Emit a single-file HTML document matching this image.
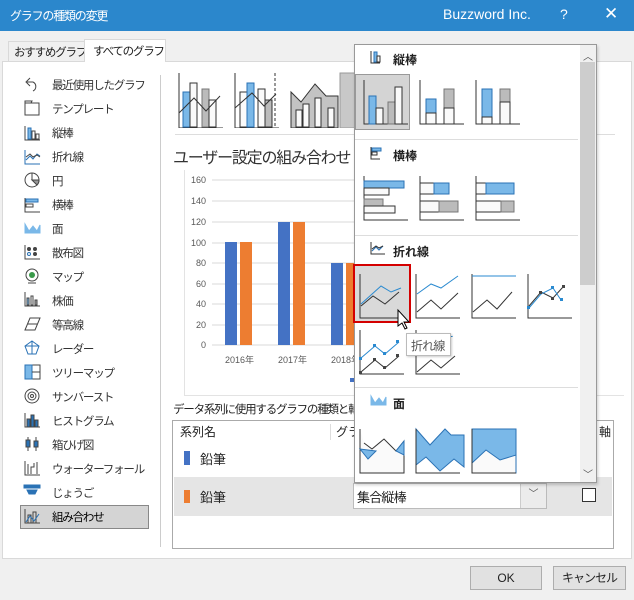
<!DOCTYPE html>
<html><head><meta charset="utf-8"><style>
*{box-sizing:border-box;margin:0;padding:0}
body{width:634px;height:600px;overflow:hidden;background:#f0f0f0;font-family:"Liberation Sans","Noto Sans CJK JP",sans-serif;font-size:12px;color:#222;position:relative}
.a{position:absolute}
.n{font-size:11px;letter-spacing:-0.8px}
.title{left:0;top:0;width:634px;height:31px;background:#2b87cc;color:#fff;font-size:13px}
.li{position:absolute;left:52px;font-size:11.5px;letter-spacing:-1.2px;color:#333}
.btn{position:absolute;top:566px;height:24px;border:1px solid #adadad;background:#e1e1e1;text-align:center;line-height:22px;font-size:12px}
</style></head><body>
<div class="a title"><span class="a" style="left:10px;top:7px;font-size:12px;letter-spacing:-1.2px">グラフの種類の変更</span><span class="a" style="left:443px;top:6px;font-size:14px">Buzzword Inc.</span><span class="a" style="left:560px;top:6px;font-size:14px">?</span><span class="a" style="left:604px;top:4px;font-size:17px">✕</span></div>
<!-- tabs -->
<div class="a" style="left:8px;top:41px;width:77px;height:20px;border:1px solid #d9d9d9;border-bottom:none;background:#f0f0f0;font-size:11.5px;letter-spacing:-1.2px;padding:2px 0 0 5px;white-space:nowrap">おすすめグラフ</div>
<div class="a" style="left:84px;top:39px;width:82px;height:23px;border:1px solid #d9d9d9;border-bottom:none;background:#fff;font-size:11.5px;letter-spacing:-1.2px;padding:3px 0 0 8px;z-index:2;white-space:nowrap">すべてのグラフ</div>
<div class="a" style="left:2px;top:61px;width:630px;height:498px;background:#fff;border:1px solid #d9d9d9"></div>
<!-- left list -->
<div class="a" style="left:20px;top:505px;width:129px;height:24px;background:#d4d4d4;border:1px solid #888"></div>
<svg class="a" style="left:0;top:0" width="160" height="560">
<g fill="none" stroke="#444" stroke-width="1">
<path d="M30 78 l-4 4 4 4 M27 82 h6 a5 5 0 0 1 0 9"/>
<path d="M25 103 h14 v12 h-14z M25 103 h6 l1 -2 h-7z"/>
<path d="M25 126 v14 h15"/><rect x="28" y="128" width="3" height="11" fill="#7ab8e8" stroke="#2a72b5"/><rect x="32" y="131" width="3" height="8"/><rect x="36" y="134" width="3" height="5"/>
<path d="M25 150 v14 h15 M26 160 l4-4 3 3 4-5 3 2" stroke="#2a72b5"/><path d="M26 157 l4-3 3 3 4-2 3 2"/>
<circle cx="32" cy="180" r="7"/><path d="M32 173 v7 h7" /><path d="M32 180 l5 5 a7 7 0 0 0 2-5z" fill="#999"/>
<path d="M25 198 v14 h15"/><rect x="26" y="199" width="12" height="3" fill="#7ab8e8" stroke="#2a72b5"/><rect x="26" y="204" width="7" height="3"/>
<path d="M25 224 l4 7 4-5 4 5 3-6 v8 h-15z" fill="#7ab8e8" stroke="#7ab8e8"/>
<path d="M25 245 v14 h15"/><circle cx="29" cy="249" r="1.5" fill="#444"/><circle cx="35" cy="249" r="1.5" fill="#444"/><circle cx="29" cy="254" r="1.5" stroke="#2a72b5"/><circle cx="35" cy="254" r="1.5" fill="#444"/>
<circle cx="32" cy="275" r="6"/><circle cx="32" cy="275" r="3" fill="#3a9a4a" stroke="none"/><path d="M28 283 h8"/>
<path d="M25 292 v14 h15"/><rect x="27" y="298" width="2" height="7" fill="#7ab8e8"/><rect x="31" y="296" width="2" height="9"/><rect x="35" y="300" width="2" height="5" fill="#aaa"/>
<path d="M25 330 l5-12 h10 l-5 12z M28 324 h9"/>
<path d="M32 341 l7 5 -3 8 h-8 l-3-8z M32 341 v13 M25 346 l14 0" stroke="#2a72b5"/>
<rect x="25" y="365" width="15" height="14"/><rect x="25" y="365" width="7" height="14" fill="#7ab8e8" stroke="#2a72b5"/><path d="M32 372 h8"/>
<circle cx="32" cy="396" r="7"/><circle cx="32" cy="396" r="4"/><circle cx="32" cy="396" r="1.5"/>
<path d="M25 413 v14 h15"/><rect x="27" y="419" width="3" height="8" fill="#2a72b5"/><rect x="31" y="415" width="3" height="12" fill="#2a72b5"/><rect x="35" y="420" width="3" height="7" fill="#2a72b5"/>
<path d="M28 437 v14 M36 437 v14" /><rect x="26" y="440" width="4" height="7" fill="#2a72b5"/><rect x="34" y="441" width="4" height="6" fill="#2a72b5"/>
<path d="M25 461 v14 h15 M28 474 v-10 M31 474 v-7 h3 v-4 M37 474 v-12"/>
<path d="M24 485 h16 v3 h-16z M27 490 h10 l-2 4 h-6z" fill="#2a72b5" stroke="#2a72b5"/>
<path d="M25 509 v14 h15"/><rect x="28" y="515" width="3" height="8"/><rect x="33" y="512" width="3" height="11"/><path d="M26 522 l4-6 4 5 5-7" stroke="#2a72b5"/>
</g></svg>
<div class="li" style="top:77px">最近使用したグラフ</div>
<div class="li" style="top:101px">テンプレート</div>
<div class="li" style="top:125px">縦棒</div>
<div class="li" style="top:149px">折れ線</div>
<div class="li" style="top:173px">円</div>
<div class="li" style="top:197px">横棒</div>
<div class="li" style="top:221px">面</div>
<div class="li" style="top:245px">散布図</div>
<div class="li" style="top:269px">マップ</div>
<div class="li" style="top:293px">株価</div>
<div class="li" style="top:317px">等高線</div>
<div class="li" style="top:341px">レーダー</div>
<div class="li" style="top:365px">ツリーマップ</div>
<div class="li" style="top:389px">サンバースト</div>
<div class="li" style="top:413px">ヒストグラム</div>
<div class="li" style="top:437px">箱ひげ図</div>
<div class="li" style="top:461px">ウォーターフォール</div>
<div class="li" style="top:485px">じょうご</div>
<div class="li" style="top:509px;color:#000">組み合わせ</div>
<div class="a" style="left:160px;top:75px;width:1px;height:472px;background:#ccc"></div>
<!-- top thumbnails -->
<svg class="a" style="left:170px;top:68px" width="190" height="60">
<g fill="#fafafa" stroke="#333">
<path d="M9 5 v55 h44" fill="none"/><rect x="13" y="24" width="7" height="35" fill="#7ab8e8" stroke="#2a72b5"/><rect x="20" y="15" width="7" height="44"/><rect x="32" y="21" width="7" height="38" fill="#bbb" stroke="#777"/><rect x="39" y="32" width="7" height="27"/><path d="M9 45 l15-15 12 13 14-15" fill="none"/>
<path d="M65 5 v55 h44" fill="none"/><path d="M105 5 v55" stroke-dasharray="3 2" fill="none"/><rect x="70" y="24" width="7" height="35"/><rect x="77" y="15" width="7" height="44" fill="#7ab8e8" stroke="#2a72b5"/><rect x="88" y="21" width="7" height="38"/><rect x="95" y="32" width="7" height="27" fill="#bbb"/><path d="M65 40 l17-15 12 13 12-12" fill="none"/>
<path d="M121 24 l10 10 14-18 11 12 h12 v32 h-47z" fill="#c3c3c3"/><rect x="126" y="42" width="6" height="17"/><rect x="133" y="36" width="6" height="23"/><rect x="145" y="30" width="6" height="29"/><rect x="158" y="40" width="6" height="19"/>
</g><rect x="170" y="5" width="20" height="55" fill="#c8c8c8" stroke="#999"/></svg>
<div class="a" style="left:175px;top:134px;width:440px;height:1px;background:#ddd"></div>
<div class="a" style="left:173px;top:144px;font-size:16px;letter-spacing:-1.2px;color:#333">ユーザー設定の組み合わせ</div>
<!-- chart -->
<div class="a" style="left:184px;top:170px;width:440px;height:226px;border-left:1px solid #e3e3e3;border-bottom:1px solid #e3e3e3"></div>
<svg class="a" style="left:184px;top:170px" width="180" height="226">
<g font-size="9" fill="#595959" text-anchor="end" font-family="Liberation Sans,sans-serif">
<text x="22" y="13">160</text><text x="22" y="34">140</text><text x="22" y="55">120</text><text x="22" y="76">100</text><text x="22" y="96">80</text><text x="22" y="117">60</text><text x="22" y="137">40</text><text x="22" y="158">20</text><text x="22" y="178">0</text></g>
<g stroke="#d9d9d9"><path d="M28 10h160M28 31h160M28 52h160M28 73h160M28 93h160M28 114h160M28 134h160M28 155h160M28 175h160"/></g>
<rect x="41" y="72" width="12" height="103" fill="#4472c4"/><rect x="56" y="72" width="12" height="103" fill="#ed7d31"/>
<rect x="94" y="52" width="12" height="123" fill="#4472c4"/><rect x="109" y="52" width="12" height="123" fill="#ed7d31"/>
<rect x="147" y="93" width="12" height="82" fill="#4472c4"/><rect x="162" y="93" width="12" height="82" fill="#ed7d31"/>
<g font-size="9" fill="#595959" font-family="Liberation Sans,Noto Sans CJK JP,sans-serif"><text x="41" y="193">2016年</text><text x="94" y="193">2017年</text><text x="147" y="193">2018年</text></g>
<rect x="166" y="208" width="4" height="4" fill="#4472c4"/>
</svg>
<div class="a" style="left:173px;top:401px;font-size:11.5px;letter-spacing:-1.2px;color:#222;white-space:nowrap">データ系列に使用するグラフの種類と軸</div>
<!-- table -->
<div class="a" style="left:172px;top:420px;width:442px;height:129px;border:1px solid #aaa;background:#fff"></div>
<div class="a" style="left:180px;top:423px;font-size:12px">系列名</div>
<div class="a" style="left:330px;top:424px;width:1px;height:16px;background:#ddd"></div>
<div class="a" style="left:336px;top:423px;font-size:12px">グラ</div>
<div class="a" style="left:599px;top:423px;font-size:12px">軸</div>
<div class="a" style="left:184px;top:451px;width:6px;height:14px;background:#4472c4"></div>
<div class="a" style="left:200px;top:449px;font-size:13px">鉛筆</div>
<div class="a" style="left:174px;top:477px;width:438px;height:39px;background:#e5e5e5"></div>
<div class="a" style="left:184px;top:490px;width:6px;height:13px;background:#ed7d31"></div>
<div class="a" style="left:200px;top:487px;font-size:13px">鉛筆</div>
<div class="a" style="left:353px;top:483px;width:194px;height:26px;background:#fff;border:1px solid #bbb"></div>
<div class="a" style="left:520px;top:484px;width:26px;height:24px;background:#ececec;border-left:1px solid #ccc;text-align:center;line-height:22px;font-size:10px;color:#555">﹀</div>
<div class="a" style="left:357px;top:487px;font-size:13px;letter-spacing:-0.8px">集合縦棒</div>
<div class="a" style="left:582px;top:488px;width:14px;height:14px;border:1px solid #333;background:#fff"></div>
<!-- buttons -->
<div class="btn" style="left:470px;width:72px">OK</div>
<div class="btn" style="left:553px;width:73px;letter-spacing:-1px">キャンセル</div>
<!-- popup -->
<div class="a" style="left:354px;top:44px;width:243px;height:439px;background:#fff;border:1px solid #999;box-shadow:1px 2px 3px rgba(0,0,0,.2)"></div>
<div class="a" style="left:580px;top:45px;width:16px;height:437px;background:#f0f0f0"></div>
<div class="a" style="left:580px;top:62px;width:15px;height:223px;background:#cdcdcd"></div>
<div class="a" style="left:583px;top:48px;font-size:10px;color:#555">︿</div>
<div class="a" style="left:583px;top:466px;font-size:10px;color:#555">﹀</div>
<div class="a" style="left:393px;top:51px;font-size:12px;font-weight:bold">縦棒</div>
<div class="a" style="left:393px;top:147px;font-size:12px;font-weight:bold">横棒</div>
<div class="a" style="left:393px;top:243px;font-size:12px;font-weight:bold">折れ線</div>
<div class="a" style="left:393px;top:395px;font-size:12px;font-weight:bold">面</div>
<div class="a" style="left:355px;top:139px;width:223px;height:1px;background:#ddd"></div>
<div class="a" style="left:355px;top:235px;width:223px;height:1px;background:#ddd"></div>
<div class="a" style="left:355px;top:387px;width:223px;height:1px;background:#ddd"></div>
<div class="a" style="left:355px;top:74px;width:55px;height:56px;background:#d4d4d4;border:1px solid #999"></div>
<div class="a" style="left:353px;top:264px;width:58px;height:59px;background:#d9d9d9;border:2px solid #d40000"></div>
<svg class="a" style="left:354px;top:44px" width="226" height="438">
<g fill="#fafafa" stroke="#333" stroke-width="1">
<path d="M17 7 v12 h9" fill="none"/><rect x="20" y="8" width="3" height="10" fill="#7ab8e8" stroke="#2a72b5"/><rect x="23" y="12" width="3" height="6"/>
<path d="M17 103 v12 h9" fill="none"/><rect x="18" y="104" width="9" height="3" fill="#7ab8e8" stroke="#2a72b5"/><rect x="18" y="108" width="5" height="3"/>
<path d="M17 198 v12 h14" fill="none"/><path d="M18 207 l4-4 3 3 4-4" fill="none" stroke="#2a72b5"/><path d="M18 205 l4-3 3 2 4-2" fill="none"/>
<path d="M17 352 l4 7 4-5 4 5 3-6 v8 h-15z" fill="#7ab8e8" stroke="#7ab8e8"/>
<path d="M10 36 v44 h44" fill="none"/><rect x="15" y="52" width="7" height="28" fill="#7ab8e8" stroke="#2a72b5"/><rect x="22" y="64" width="7" height="16"/><rect x="34" y="58" width="7" height="22" fill="#bbb" stroke="#777"/><rect x="41" y="43" width="7" height="37"/>
<path d="M66 36 v44 h44" fill="none"/><rect x="72" y="55" width="10" height="14" fill="#7ab8e8" stroke="#2a72b5"/><rect x="72" y="69" width="10" height="11"/><rect x="90" y="45" width="10" height="19" fill="#bbb" stroke="#777"/><rect x="90" y="64" width="10" height="16"/>
<path d="M122 36 v44 h44" fill="none"/><rect x="128" y="45" width="10" height="28" fill="#7ab8e8" stroke="#2a72b5"/><rect x="128" y="73" width="10" height="7"/><rect x="146" y="45" width="10" height="13" fill="#bbb" stroke="#777"/><rect x="146" y="58" width="10" height="22"/>
<path d="M10 132 v44 h44" fill="none"/><rect x="10" y="137" width="40" height="7" fill="#7ab8e8" stroke="#2a72b5"/><rect x="10" y="144" width="25" height="7"/><rect x="10" y="155" width="19" height="7" fill="#bbb" stroke="#777"/><rect x="10" y="162" width="31" height="7"/>
<path d="M66 132 v44 h44" fill="none"/><rect x="66" y="139" width="14" height="11"/><rect x="80" y="139" width="15" height="11" fill="#7ab8e8" stroke="#2a72b5"/><rect x="66" y="157" width="19" height="11"/><rect x="85" y="157" width="19" height="11" fill="#bbb" stroke="#777"/>
<path d="M122 132 v44 h44" fill="none"/><rect x="122" y="139" width="10" height="11"/><rect x="132" y="139" width="28" height="11" fill="#7ab8e8" stroke="#2a72b5"/><rect x="122" y="157" width="25" height="11"/><rect x="147" y="157" width="13" height="11" fill="#bbb" stroke="#777"/>
<g fill="none">
<path d="M6 230 v44 h44"/><path d="M7 262 l12-10 12 8 14-12"/><path d="M7 260 l20-18 10 6 10-4" stroke="#2a8ad0"/>
<path d="M62 230 v44 h44"/><path d="M63 268 l14-12 10 9 17-16"/><path d="M63 250 l14-10 10 4 17-12" stroke="#2a8ad0"/>
<path d="M118 230 v44 h44"/><path d="M118 232 h44" stroke="#2a8ad0"/><path d="M119 268 l14-12 10 9 15-17"/>
<path d="M174 230 v44 h44"/><path d="M175 262 l12-14 12 6 10-11"/><path d="M175 264 l12-14 12-6 8 12" stroke="#2a8ad0"/>
<path d="M6 286 v44 h44"/><path d="M7 328 l14-12 10 8 14-12"/><path d="M7 314 l14-12 10 8 14-12" stroke="#2a8ad0"/>
<path d="M62 286 v44 h44"/><path d="M63 328 l14-12 10 8 14-12"/><path d="M63 300 l14-6 10 0 14-2" stroke="#2a8ad0" stroke-dasharray="2 3"/>
</g>
<g fill="#444" stroke="none"><rect x="5" y="327" width="3" height="3"/><rect x="19" y="314" width="3" height="3"/><rect x="29" y="322" width="3" height="3"/><rect x="42" y="310" width="3" height="3"/><rect x="185" y="247" width="3" height="3"/><rect x="197" y="253" width="3" height="3"/><rect x="208" y="241" width="3" height="3"/></g>
<g fill="#2a8ad0" stroke="none"><rect x="5" y="313" width="3" height="3"/><rect x="19" y="300" width="3" height="3"/><rect x="29" y="308" width="3" height="3"/><rect x="42" y="296" width="3" height="3"/><rect x="173" y="262" width="3" height="3"/><rect x="197" y="242" width="3" height="3"/><rect x="206" y="254" width="3" height="3"/></g>
<path d="M6 385 v44 h44 v-32 l-8 10 -12-12 -12 10 -8-6" fill="#fafafa"/><path d="M6 405 l8 10 8-8z M50 397 l-8 10 8 4z" fill="#7ab8e8" stroke="#2a72b5"/>
<path d="M62 385 l14 16 15-16 6 6 h13 v32 l-10-8 -14 12 -14-14 -10 8z" fill="#7ab8e8" stroke="#2a72b5"/><path d="M62 385 v44 h44" fill="none"/>
<rect x="118" y="385" width="44" height="44" fill="#7ab8e8" stroke="#2a72b5"/><path d="M118 419 l14-13 14 10 16-5 v18 h-44z" fill="#fafafa" stroke="#2a72b5"/><path d="M118 385 v44 h44" fill="none"/>
</g>
<path d="M44 266 v16 l4-3 3 6 2-1 -3-6 h5z" fill="#fff" stroke="#000"/>
</svg>
<div class="a" style="left:406px;top:333px;width:45px;height:23px;background:#fff;border:1px solid #bbb;font-size:12px;letter-spacing:-0.8px;padding:3px 0 0 4px;color:#555;box-shadow:1px 1px 2px rgba(0,0,0,.2)">折れ線</div>
</body></html>
